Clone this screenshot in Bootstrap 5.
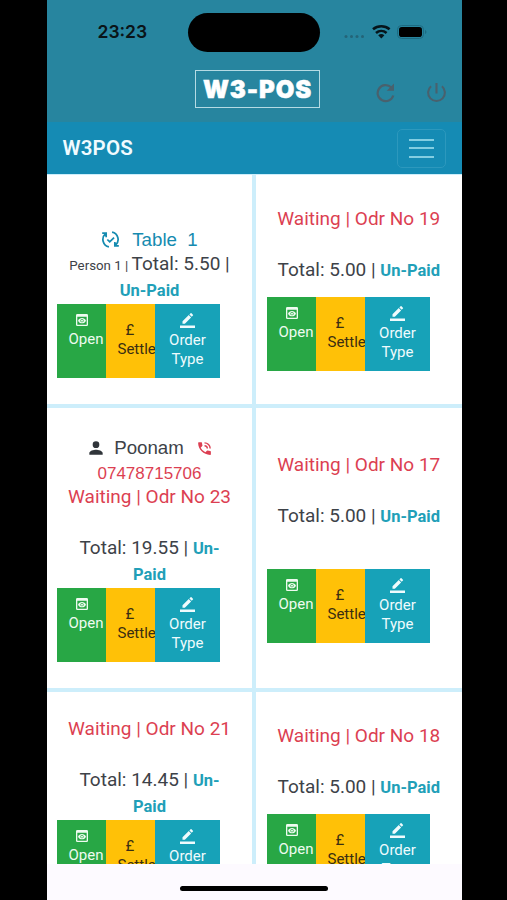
<!DOCTYPE html>
<html lang="en">
<head>
<meta charset="utf-8">
<meta name="viewport" content="width=device-width, initial-scale=1">
<title>W3POS</title>
<link href="https://cdn.jsdelivr.net/npm/bootstrap@5.3.0/dist/css/bootstrap.min.css" rel="stylesheet">
<style>
body{background:#000;font-family:Roboto,"Liberation Sans",sans-serif;color:#3d4248}
.phone{width:414.5px;height:900px;margin-left:47px;background:#fdfaff}
.topbar{height:122px;background:#27859f}
.statusbar{height:64px;padding:0 29px 0 50px}
.clock{font:600 17.5px/1 Inter,sans-serif;color:#0a1418;width:91px;padding-left:.5px}
.island{width:132px;height:39px;border-radius:20px;background:#000}
.brandrow{height:58px;display:grid;grid-template-columns:148px 125px 1fr}
.logo{width:125px;height:38px;grid-column:2;margin-top:6px;border:1.5px solid #b5dbe4;color:#fff;font:900 24px/37px Inter,sans-serif;letter-spacing:.9px;-webkit-text-stroke:.5px #fff;white-space:nowrap}
.tools{padding:18px 15px 0 56px}
.mainnav{height:52px;background:#158bb4;padding:0 16px 0 15.5px}
.mainnav .navbar-brand{font-size:20.5px;font-weight:600;color:#f0fbff;line-height:53px;letter-spacing:.2px}
.menubtn{width:49px;height:39px;border:1px solid #2c98bd;border-radius:5px}
.menubtn i{display:block;width:25px;height:2px;background:#83cee2;margin-bottom:6.5px}
.menubtn i:last-child{margin-bottom:0}
.orders{height:690px;display:grid;grid-template-columns:205px 205.5px;column-gap:4px;grid-template-rows:229px 280px 280px;row-gap:4px;background:#cdeefb;padding-top:1px}
.ordercell{background:#fff;overflow:hidden;text-align:center;white-space:nowrap}
.ordercell:nth-child(even) .acts{margin-left:11px}
.ln{font-size:19px;line-height:27px;height:27px}
.wait{font-size:19px;line-height:24px;height:24px;margin-bottom:25px;color:#dc3f52}
.person{font-size:13.3px}
.unpaid{font-size:16.5px;font-weight:700;color:#219fb8}
.tbl{color:#158bb0;height:21px;line-height:22px;font-size:18.7px;font-family:"Liberation Sans",sans-serif}
.cust{height:26px;line-height:26px;font-size:18.7px;font-family:"Liberation Sans",sans-serif}
.tel{height:24px;line-height:26px;font-size:17px;font-family:"Liberation Sans",sans-serif;color:#dc3f52}
.acts{width:163px;height:74px;margin-left:10px;font-size:15px;line-height:19px;text-align:left}
.acts>div{overflow:hidden}
.open{width:49px;background:#28a745;color:#eefbf0;padding:8px 0 0 11.5px}
.open svg{margin:0 0 2px 5px}
.settle{width:49px;background:#ffc107;color:#3a2e12;padding:17px 0 0 11.5px}
.settle span{padding-left:8px}
.otype{width:65px;background:#17a2b8;color:#effbfd;padding:9px 0 0;text-align:center}
svg{display:block}
.a1{padding-top:54px}.a2{padding-top:32px}.a3{padding-top:27px}.a4{padding-top:45px}.a5{padding-top:25px}.a6{padding-top:31.5px}
.gap13{height:14px}.gap40{height:39.5px}
.homebar{width:148px;height:5px;border-radius:3px;background:#000;margin-top:22px}
</style>
</head>
<body>
<svg class="d-none">
<symbol id="view" viewBox="0 0 24 24"><path fill="currentColor" d="M19 3H5a2 2 0 0 0-2 2v14a2 2 0 0 0 2 2h14a2 2 0 0 0 2-2V5a2 2 0 0 0-2-2zm0 16H5V7h14v12zm-5.500-6a1.500 1.500 0 1 1-3 0 1.500 1.500 0 0 1 3 0zM12 9c-2.730 0-5.060 1.660-6 4 .94 2.340 3.270 4 6 4s5.060-1.660 6-4c-.94-2.340-3.270-4-6-4zm0 6.500a2.500 2.500 0 1 1 0-5 2.500 2.500 0 0 1 0 5z"/></symbol>
<symbol id="pen" viewBox="0 0 24 24"><path fill="currentColor" d="M17.750 7 14 3.250l-10 10V17h3.750l10-10zm2.960-2.960a1 1 0 0 0 0-1.410L18.370.290a1 1 0 0 0-1.410 0L15 2.250 18.750 6l1.960-1.960zM0 20h24v4H0z"/></symbol>
</svg>
<div class="phone d-flex flex-column overflow-hidden">
<header class="topbar">
<div class="statusbar d-flex align-items-center">
<span class="clock">23:23</span><span class="island"></span>
<svg class="ms-auto me-1" width="86" height="20" viewBox="0 0 86 20"><g fill="#246478"><circle cx="3" cy="14.500" r="1.500"/><circle cx="8.500" cy="14.500" r="1.500"/><circle cx="14" cy="14.500" r="1.500"/><circle cx="19.500" cy="14.500" r="1.500"/></g><g fill="none" stroke="#06141a" stroke-width="2.600"><path d="M30 7.200a13 13 0 0 1 16.600 0M33 10.900a8.300 8.300 0 0 1 10.600 0"/></g><path fill="#06141a" d="M35.200 13.200a5 5 0 0 1 6.200 0l-3.100 3.300z"/><rect x="54.500" y="3.500" width="26" height="13" rx="4" fill="none" stroke="#1d6b82"/><rect x="56" y="5" width="23" height="10" rx="2.800" fill="#000"/><path d="M82 8v4q1.500-.5 1.500-2T82 8" fill="#1d6b82"/></svg>
</div>
<div class="brandrow">
<div class="logo d-flex justify-content-center">W3-POS</div>
<div class="tools d-flex justify-content-between align-items-start">
<svg width="20" height="22" viewBox="0 0 20 22" fill="none" stroke="#49616d" stroke-width="2.200"><path d="M17.300 13.500A8 8 0 1 1 15.300 5.500"/><path d="M18 1.500v7.300h-7.300z" fill="#49616d" stroke="none"/></svg>
<svg width="21" height="21" viewBox="0 0 22 22" fill="none" stroke="#49616d" stroke-width="2.200"><path d="M11 1v11M5.300 4.400a8.800 8.800 0 1 0 11.400 0"/></svg>
</div>
</div>
</header>
<nav class="mainnav navbar navbar-expand flex-nowrap justify-content-between">
<a class="navbar-brand p-0 m-0" href="#">W3POS</a>
<button class="menubtn bg-transparent p-0 d-flex flex-column align-items-center justify-content-center" aria-label="Menu"><i></i><i></i><i></i></button>
</nav>
<main class="orders overflow-hidden flex-shrink-0">
<section class="ordercell a1">
<div class="tbl d-flex justify-content-center align-items-center"><svg class="me-2" width="19" height="19" viewBox="0 0 24 24" fill="none" stroke="currentColor" stroke-width="2.200"><path d="M10 21.300A9.500 9.500 0 0 1 5.500 5M14 2.700A9.500 9.500 0 0 1 18.500 19M1.500 4H6.500v5M22.500 20H17.500v-5M8 12l3 3 5.500-5.500"/></svg><span class="tname ms-1">Table&nbsp; 1</span></div>
<div class="ln"><span class="person">Person 1 | </span>Total: 5.50 |</div>
<div class="ln unpaid">Un-Paid</div>
<div class="acts d-flex"><div class="open"><svg width="16" height="16"><use href="#view" width="16" height="16"/></svg><span class="d-block">Open</span></div><div class="settle"><span class="d-block">£</span>Settle</div><div class="otype"><svg class="mx-auto" width="15" height="18"><use href="#pen" width="15" height="15"/></svg>Order<br>Type</div></div>
</section>
<section class="ordercell a2">
<div class="wait">Waiting | Odr No 19</div>
<div class="ln">Total: 5.00 | <span class="unpaid">Un-Paid</span></div><div class="gap13"></div>
<div class="acts d-flex"><div class="open"><svg width="16" height="16"><use href="#view" width="16" height="16"/></svg><span class="d-block">Open</span></div><div class="settle"><span class="d-block">£</span>Settle</div><div class="otype"><svg class="mx-auto" width="15" height="18"><use href="#pen" width="15" height="15"/></svg>Order<br>Type</div></div>
</section>
<section class="ordercell a3">
<div class="cust d-flex justify-content-center align-items-center"><svg width="20" height="20" viewBox="0 0 24 24"><path fill="#30353a" d="M12 12a4 4 0 1 0 0-8 4 4 0 0 0 0 8zm0 2c-2.670 0-8 1.340-8 4v2h16v-2c0-2.660-5.330-4-8-4z"/></svg><span class="cname ms-2 me-2 pe-1">Poonam</span><svg width="17" height="17" viewBox="0 0 24 24" fill="#dc3f52"><path d="M20 15.500c-1.250 0-2.450-.2-3.570-.57a1 1 0 0 0-1.020.24l-2.200 2.200a15 15 0 0 1-6.590-6.590l2.200-2.200a1 1 0 0 0 .25-1.020A11.400 11.400 0 0 1 8.500 4a1 1 0 0 0-1-1H4a1 1 0 0 0-1 1c0 9.390 7.610 17 17 17a1 1 0 0 0 1-1v-3.500a1 1 0 0 0-1-1z"/><path d="M12 4a8 8 0 0 1 8 8M12 8a4 4 0 0 1 4 4" fill="none" stroke="#dc3f52" stroke-width="2"/></svg></div>
<div class="tel">07478715706</div>
<div class="wait">Waiting | Odr No 23</div>
<div class="ln">Total: 19.55 | <span class="unpaid">Un-</span></div>
<div class="ln unpaid">Paid</div>
<div class="acts d-flex"><div class="open"><svg width="16" height="16"><use href="#view" width="16" height="16"/></svg><span class="d-block">Open</span></div><div class="settle"><span class="d-block">£</span>Settle</div><div class="otype"><svg class="mx-auto" width="15" height="18"><use href="#pen" width="15" height="15"/></svg>Order<br>Type</div></div>
</section>
<section class="ordercell a4">
<div class="wait">Waiting | Odr No 17</div>
<div class="ln">Total: 5.00 | <span class="unpaid">Un-Paid</span></div><div class="gap40"></div>
<div class="acts d-flex"><div class="open"><svg width="16" height="16"><use href="#view" width="16" height="16"/></svg><span class="d-block">Open</span></div><div class="settle"><span class="d-block">£</span>Settle</div><div class="otype"><svg class="mx-auto" width="15" height="18"><use href="#pen" width="15" height="15"/></svg>Order<br>Type</div></div>
</section>
<section class="ordercell a5">
<div class="wait">Waiting | Odr No 21</div>
<div class="ln">Total: 14.45 | <span class="unpaid">Un-</span></div>
<div class="ln unpaid">Paid</div>
<div class="acts d-flex"><div class="open"><svg width="16" height="16"><use href="#view" width="16" height="16"/></svg><span class="d-block">Open</span></div><div class="settle"><span class="d-block">£</span>Settle</div><div class="otype"><svg class="mx-auto" width="15" height="18"><use href="#pen" width="15" height="15"/></svg>Order<br>Type</div></div>
</section>
<section class="ordercell a6">
<div class="wait">Waiting | Odr No 18</div>
<div class="ln">Total: 5.00 | <span class="unpaid">Un-Paid</span></div><div class="gap13"></div>
<div class="acts d-flex"><div class="open"><svg width="16" height="16"><use href="#view" width="16" height="16"/></svg><span class="d-block">Open</span></div><div class="settle"><span class="d-block">£</span>Settle</div><div class="otype"><svg class="mx-auto" width="15" height="18"><use href="#pen" width="15" height="15"/></svg>Order<br>Type</div></div>
</section>
</main>
<div class="homebar mx-auto"></div>
</div>
<script src="https://cdn.jsdelivr.net/npm/bootstrap@5.3.0/dist/js/bootstrap.bundle.min.js"></script>
</body>
</html>
